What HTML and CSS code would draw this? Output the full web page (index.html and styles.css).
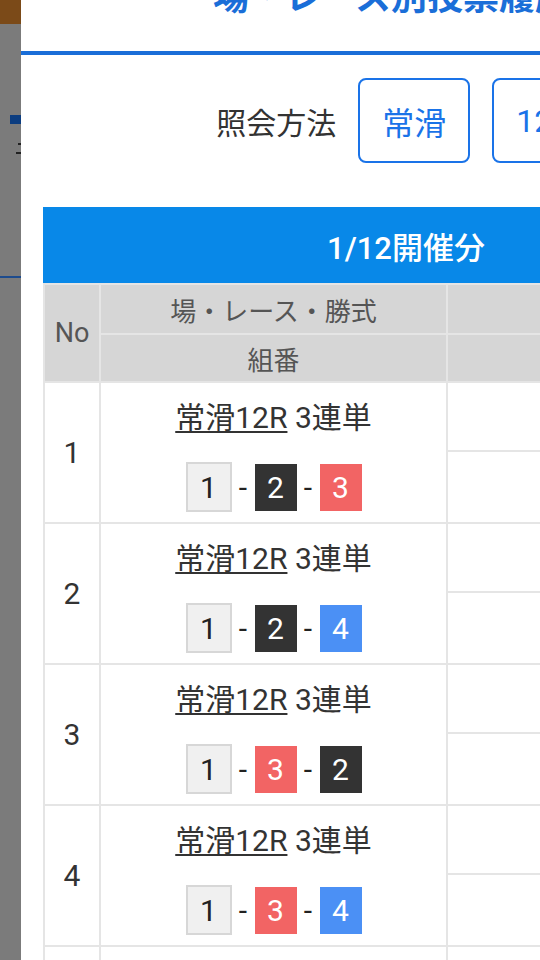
FILE: index.html
```html
<!DOCTYPE html>
<html lang="ja">
<head>
<meta charset="utf-8">
<title>場・レース別投票履歴</title>
<link rel="stylesheet" href="styles.css">
</head>
<body>
<div class="page">
  <div class="page-header"></div>
  <div class="page-body">
    <div class="page-mark"></div>
    <div class="page-dash page-dash-a"></div>
    <div class="page-dash page-dash-b"></div>
    <div class="page-rule"></div>
  </div>
</div>

<div class="modal">
  <h2 class="modal-title">場・レース別投票履歴</h2>
  <div class="modal-body">
    <div class="query">
      <span class="query-label">照会方法</span>
      <button class="query-btn">常滑</button>
      <button class="query-btn">12R</button>
    </div>

    <div class="history">
      <div class="history-caption">1/12開催分</div>
      <div class="history-grid">
        <div class="cell head head-no">No</div>
        <div class="cell head">場・レース・勝式</div>
        <div class="cell head"></div>
        <div class="cell head">組番</div>
        <div class="cell head"></div>

        <div class="cell no">1</div>
        <div class="cell main">
          <div class="race"><span class="race-link">常滑12R</span> 3連単</div>
          <div class="combo"><span class="num num-w">1</span><span class="sep">-</span><span class="num num-k">2</span><span class="sep">-</span><span class="num num-r">3</span></div>
        </div>
        <div class="cell"></div>
        <div class="cell"></div>

        <div class="cell no">2</div>
        <div class="cell main">
          <div class="race"><span class="race-link">常滑12R</span> 3連単</div>
          <div class="combo"><span class="num num-w">1</span><span class="sep">-</span><span class="num num-k">2</span><span class="sep">-</span><span class="num num-b">4</span></div>
        </div>
        <div class="cell"></div>
        <div class="cell"></div>

        <div class="cell no">3</div>
        <div class="cell main">
          <div class="race"><span class="race-link">常滑12R</span> 3連単</div>
          <div class="combo"><span class="num num-w">1</span><span class="sep">-</span><span class="num num-r">3</span><span class="sep">-</span><span class="num num-k">2</span></div>
        </div>
        <div class="cell"></div>
        <div class="cell"></div>

        <div class="cell no">4</div>
        <div class="cell main">
          <div class="race"><span class="race-link">常滑12R</span> 3連単</div>
          <div class="combo"><span class="num num-w">1</span><span class="sep">-</span><span class="num num-r">3</span><span class="sep">-</span><span class="num num-b">4</span></div>
        </div>
        <div class="cell"></div>
        <div class="cell"></div>

        <div class="cell no"></div>
        <div class="cell main"></div>
        <div class="cell"></div>
        <div class="cell"></div>
      </div>
    </div>
  </div>
</div>
</body>
</html>
```

FILE: styles.css
```css
html, body {
  margin: 0;
  padding: 0;
}

body {
  width: 540px;
  height: 960px;
  overflow: hidden;
  position: relative;
  font-family: Roboto, "Noto Sans CJK JP", sans-serif;
  background: #7b7b7b;
}

/* dimmed page behind the modal */
.page {
  width: 100%;
  height: 960px;
  background: #7b7b7b;
}

.page-header {
  height: 24px;
  background: #7b4a18;
}

.page-body {
  display: flex;
  flex-direction: column;
  align-items: flex-start;
}

.page-mark {
  margin: 91px 0 0 10px;
  width: 14px;
  height: 9px;
  background: #0c3d80;
}

.page-dash {
  height: 2px;
  background: #222;
}

.page-dash-a {
  margin: 19px 0 0 18px;
  width: 6px;
}

.page-dash-b {
  margin: 7px 0 0 16px;
  width: 8px;
}

.page-rule {
  margin-top: 122px;
  width: 100%;
  height: 2px;
  background: #1d4b8d;
}

/* modal */
.modal {
  position: absolute;
  left: 21px;
  top: -20px;
  width: 760px;
  min-height: 1000px;
  background: #fff;
}

.modal-title {
  margin: 0;
  padding: 0 18px 35px 0;
  font-size: 36px;
  line-height: 36px;
  font-weight: 700;
  color: #1a6ed8;
  text-align: center;
  border-bottom: 4px solid #1a6ed8;
}

.modal-body {
  padding: 23px 0 0 22px;
}

.query {
  display: flex;
  align-items: center;
  justify-content: center;
  gap: 22px;
  padding-right: 12px;
}

.query-label {
  font-size: 30px;
  color: #333;
}

.query-btn {
  box-sizing: border-box;
  height: 85px;
  padding: 0 22px;
  border: 2px solid #1a73e8;
  border-radius: 8px;
  background: #fff;
  color: #1a73e8;
  font-family: Roboto, "Noto Sans CJK JP", sans-serif;
  font-size: 32px;
}

.history {
  margin-top: 44px;
  width: 726px;
}

.history-caption {
  height: 76px;
  display: flex;
  align-items: center;
  justify-content: center;
  background: #0888e8;
  color: #fff;
  font-size: 31px;
  font-weight: 500;
}

.history-grid {
  display: grid;
  grid-template-columns: 54px 345px 1fr;
  grid-template-rows: 48px 46px repeat(5, 67px 70px);
  gap: 2px;
  padding: 2px;
  background: #e5e5e5;
}

.cell {
  background: #fff;
  display: flex;
  align-items: center;
  justify-content: center;
}

.head {
  background: #d6d6d6;
  color: #555;
  font-size: 26px;
}

.head-no {
  grid-row: span 2;
  font-size: 27px;
}

.no {
  grid-row: span 2;
  font-size: 30px;
  color: #333;
}

.main {
  grid-row: span 2;
  flex-direction: column;
  gap: 26px;
  padding-top: 7px;
}

.race {
  font-size: 30px;
  line-height: 36px;
  color: #333;
}

.race-link {
  text-decoration: underline;
  text-decoration-thickness: 2px;
  text-underline-offset: 3px;
}

.combo {
  display: flex;
  align-items: center;
}

.num {
  box-sizing: border-box;
  width: 42px;
  height: 47px;
  display: flex;
  align-items: center;
  justify-content: center;
  font-size: 30px;
  color: #fff;
}

.num-w {
  width: 46px;
  height: 50px;
  background: #f0f0f0;
  border: 2px solid #d7d7d7;
  color: #222;
}

.num-k {
  background: #333;
}

.num-r {
  background: #f26464;
}

.num-b {
  background: #4b90f5;
}

.sep {
  width: 23px;
  text-align: center;
  font-size: 30px;
  color: #222;
}
```
